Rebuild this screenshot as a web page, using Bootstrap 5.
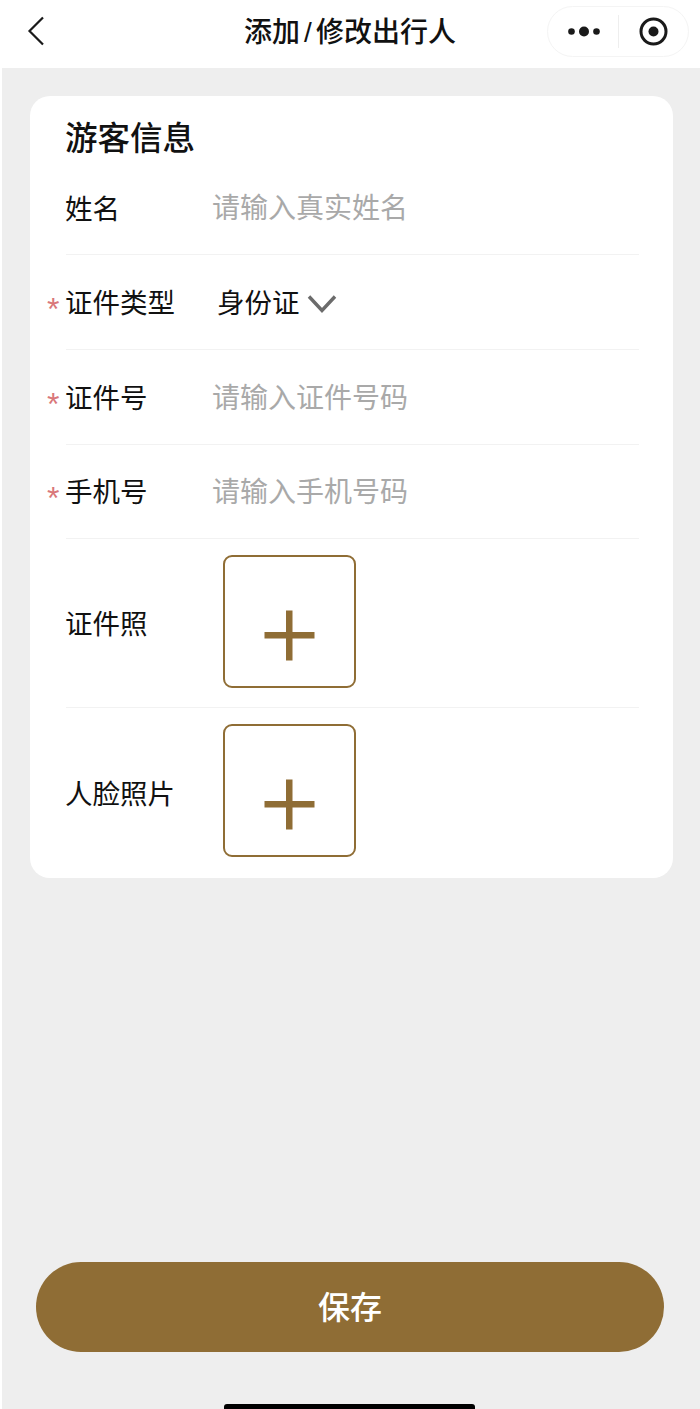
<!DOCTYPE html>
<html lang="zh-CN">
<head>
    <meta charset="UTF-8">
    <meta name="viewport" content="width=device-width, initial-scale=1.0">
    <title>添加/修改出行人</title>
    <link href="https://cdn.jsdelivr.net/npm/bootstrap@5.3.1/dist/css/bootstrap.min.css" rel="stylesheet">
    <style>
        html, body {
            height: 1409px;
            overflow: hidden;
        }
        body {
            background-color: #fff;
            color: #111;
            font-family: "Liberation Sans", "Noto Sans CJK SC", sans-serif;
        }
        .page-wrap {
            height: 1409px;
            position: relative;
        }
        .top-bar {
            height: 68px;
            padding-left: 26px;
            position: relative;
        }
        .top-title {
            font-size: 28px;
            font-weight: 500;
            line-height: 1;
            position: absolute;
            left: 0;
            right: 0;
            top: 19px;
            text-align: center;
        }
        .title-slash {
            margin: 0 4px;
        }
        .capsule {
            position: absolute;
            left: 547px;
            top: 6px;
            width: 142px;
            height: 51px;
            border: 1px solid #f4f4f4;
            border-radius: 26px;
        }
        .main-area {
            background-color: #eeeeee;
            margin-left: 2px;
            height: 1341px;
            padding: 28px 27px 0 28px;
            position: relative;
        }
        .info-card {
            background-color: #fff;
            border-radius: 20px;
            height: 782px;
            padding: 22px 34px 0 36px;
        }
        .card-heading {
            font-size: 32.500px;
            font-weight: 500;
            line-height: 42px;
            margin: 0 0 0 -1px;
        }
        .form-line {
            position: relative;
            border-bottom: 1px solid #f2f2f2;
            font-size: 27.500px;
            line-height: 40px;
        }
        .form-line.last-line {
            border-bottom: 0;
        }
        .line-1 { height: 95px; padding-top: 30px; }
        .line-2 { height: 95px; padding-top: 29px; }
        .line-3 { height: 95px; padding-top: 29px; }
        .line-4 { height: 94px; padding-top: 28px; }
        .line-5 { height: 169px; padding-top: 16px; }
        .line-6 { height: 150px; padding-top: 16px; }
        .field-label {
            width: 147px;
            margin-left: -1px;
            flex-shrink: 0;
        }
        .upload-label {
            margin-right: 1px;
            padding-top: 50px;
        }
        .line-6 .upload-label {
            padding-top: 51px;
        }
        .field-hint {
            color: #a9a9a9;
            font-size: 28px;
            line-height: 40px;
        }
        .line-1 .field-hint {
            margin-top: -1px;
        }
        .field-value {
            padding-left: 5px;
        }
        .chevron-icon {
            margin-left: 7px;
        }
        .req-star {
            position: absolute;
            left: -19px;
            color: #d9777a;
            font-size: 32px;
            line-height: 1;
        }
        .line-2 .req-star { top: 38px; }
        .line-3 .req-star { top: 38px; }
        .line-4 .req-star { top: 37px; }
        .upload-box {
            width: 133px;
            height: 133px;
            margin-left: 10px;
            border: 2px solid #8f6d35;
            border-radius: 9px;
        }
        .save-btn {
            position: absolute;
            left: 34px;
            top: 1194px;
            width: 628px;
            height: 90px;
            padding-top: 8px;
            border: 0;
            border-radius: 45px;
            background-color: #8f6d35;
            color: #fff;
            font-size: 32px;
            font-weight: 500;
        }
        .home-bar {
            position: absolute;
            left: 224px;
            top: 1404px;
            width: 251px;
            height: 5px;
            background-color: #000;
            border-radius: 3px 3px 0 0;
        }
    </style>
</head>
<body>
<div class="page-wrap">
    <div class="top-bar">
        <svg width="20" height="30" viewBox="0 0 20 30" style="margin-top:16px" fill="none" stroke="#1a1a1a" stroke-width="2.200">
            <path d="M17 1.500 L3.500 15 L17 28.500"/>
        </svg>
        <div class="top-title">添加<span class="title-slash">/</span>修改出行人</div>
        <div class="capsule">
            <svg width="142" height="51" viewBox="0 0 142 51">
                <circle cx="23.500" cy="24.500" r="3.300" fill="#1a1a1a"/>
                <circle cx="36" cy="24.500" r="5" fill="#1a1a1a"/>
                <circle cx="48.500" cy="24.500" r="3.300" fill="#1a1a1a"/>
                <rect x="70" y="8" width="1" height="33" fill="#eeeeee"/>
                <circle cx="105.500" cy="24.500" r="12.500" fill="none" stroke="#1a1a1a" stroke-width="3"/>
                <circle cx="105.500" cy="24.500" r="5" fill="#1a1a1a"/>
            </svg>
        </div>
    </div>

    <div class="main-area">
        <div class="info-card">
            <h5 class="card-heading">游客信息</h5>

            <div class="form-line line-1 d-flex">
                <div class="field-label">姓名</div>
                <div class="field-hint">请输入真实姓名</div>
            </div>

            <div class="form-line line-2 d-flex">
                <span class="req-star">*</span>
                <div class="field-label">证件类型</div>
                <div class="field-value d-flex align-items-center align-self-start">
                    身份证
                    <svg class="chevron-icon" width="30" height="20" viewBox="0 0 30 20" fill="none" stroke="#6b6b6b" stroke-width="3.400">
                        <path d="M2 2.500 L15 16.500 L28 2.500"/>
                    </svg>
                </div>
            </div>

            <div class="form-line line-3 d-flex">
                <span class="req-star">*</span>
                <div class="field-label">证件号</div>
                <div class="field-hint">请输入证件号码</div>
            </div>

            <div class="form-line line-4 d-flex">
                <span class="req-star">*</span>
                <div class="field-label">手机号</div>
                <div class="field-hint">请输入手机号码</div>
            </div>

            <div class="form-line line-5 d-flex">
                <div class="field-label upload-label">证件照</div>
                <div class="upload-box">
                    <svg width="129" height="129" viewBox="0 0 129 129" fill="#8f6d35">
                        <rect x="39.500" y="75" width="50" height="6.500"/>
                        <rect x="61" y="53.500" width="6.500" height="50"/>
                    </svg>
                </div>
            </div>

            <div class="form-line line-6 last-line d-flex">
                <div class="field-label upload-label">人脸照片</div>
                <div class="upload-box">
                    <svg width="129" height="129" viewBox="0 0 129 129" fill="#8f6d35">
                        <rect x="39.500" y="75" width="50" height="6.500"/>
                        <rect x="61" y="53.500" width="6.500" height="50"/>
                    </svg>
                </div>
            </div>
        </div>
        <button type="button" class="btn save-btn">保存</button>
    </div>
    <div class="home-bar"></div>
</div>
<script src="https://cdn.jsdelivr.net/npm/bootstrap@5.3.1/dist/js/bootstrap.bundle.min.js"></script>
</body>
</html>
